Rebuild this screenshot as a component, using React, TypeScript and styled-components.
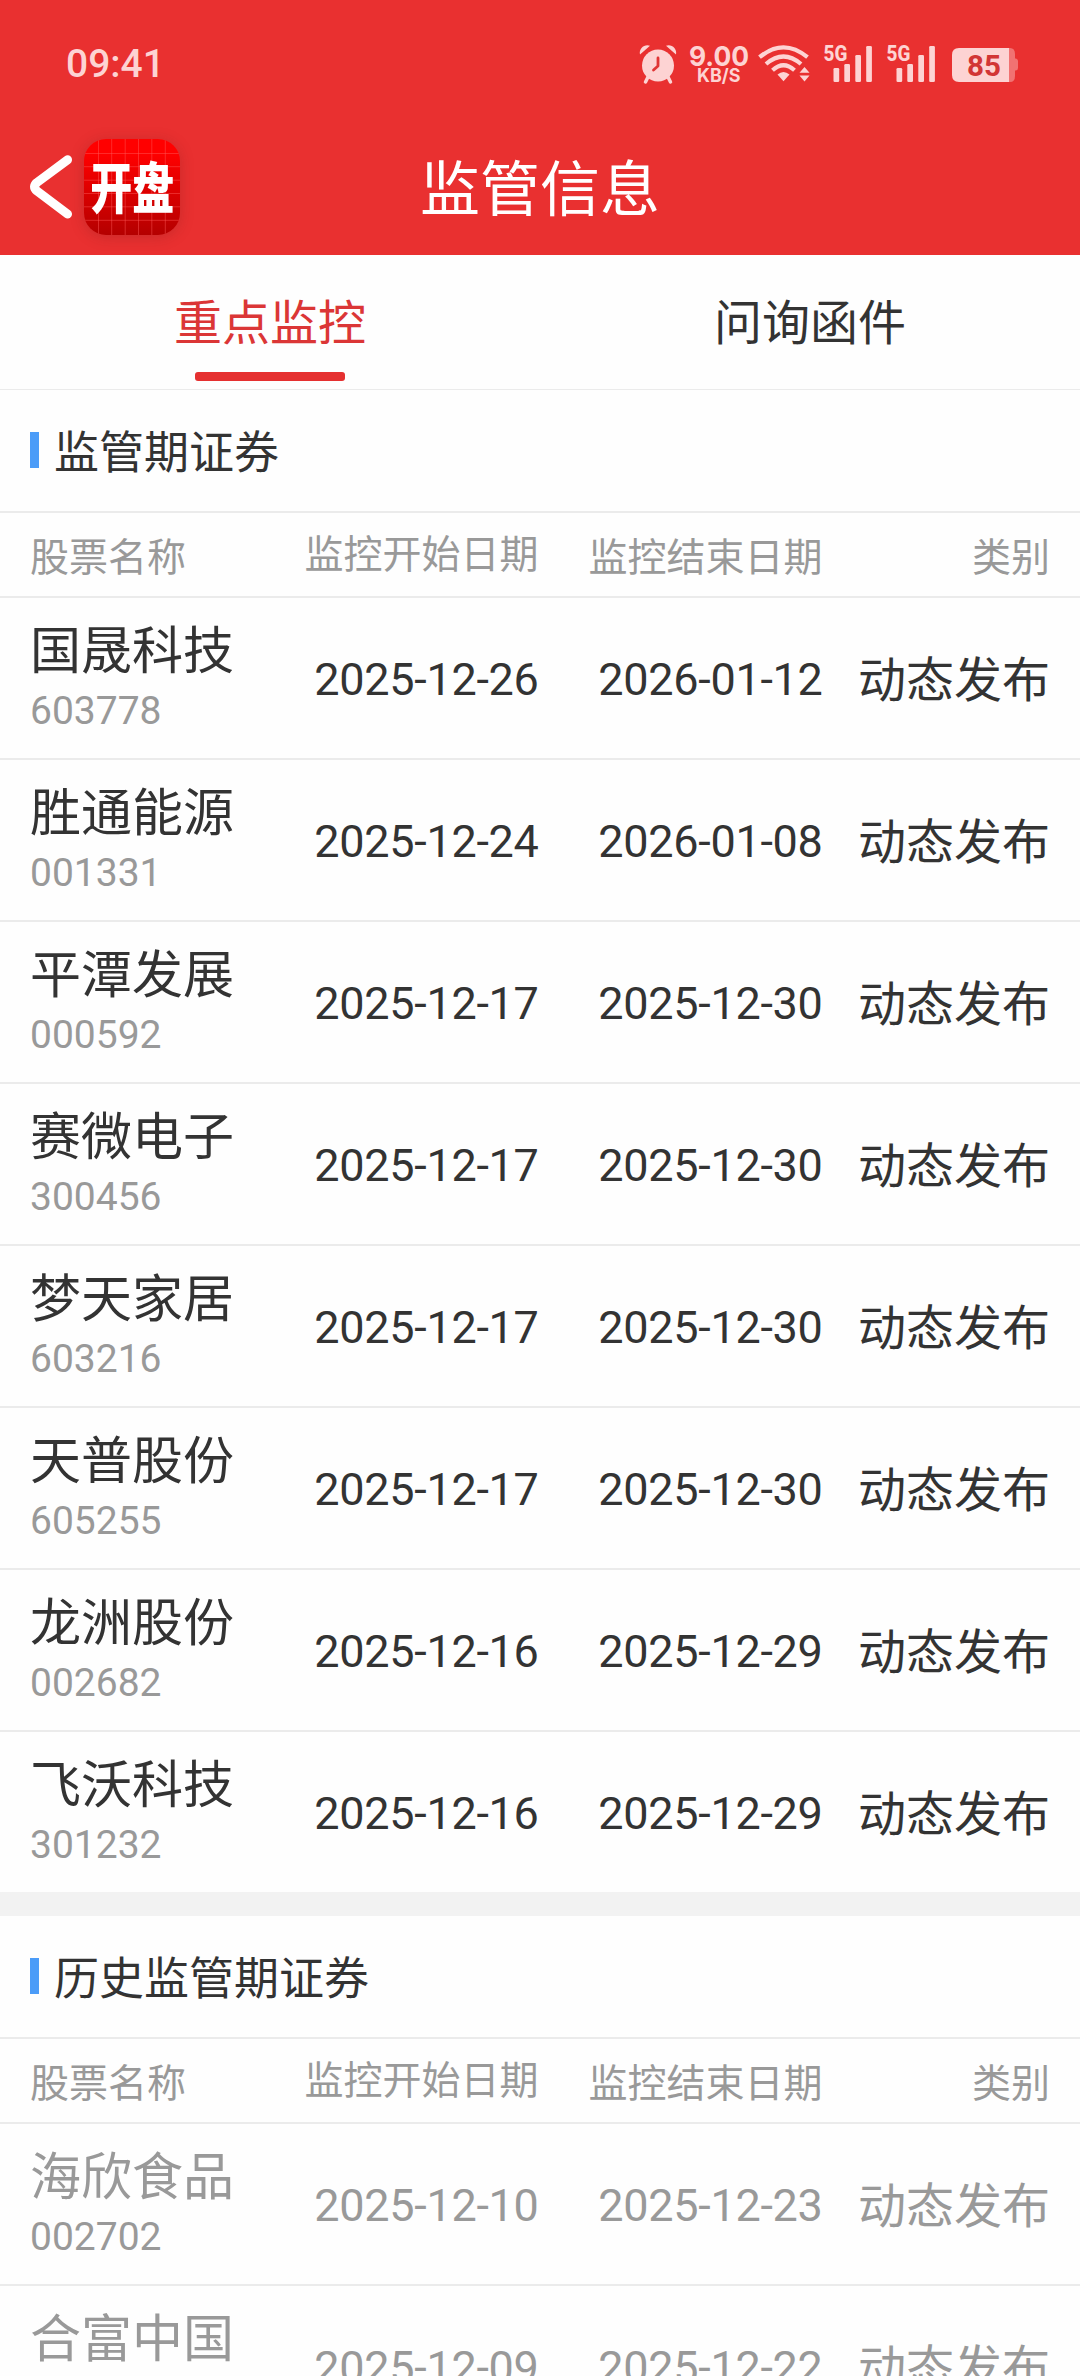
import React from "react";
import styled, { createGlobalStyle } from "styled-components";

const Global = createGlobalStyle`
  * { box-sizing: border-box; }
  body { margin: 0; background: #fff; }
`;

const Page = styled.div`
  width: 1080px;
  height: 2376px;
  overflow: hidden;
  background: #fefefe;
  color: #333;
  font-family: Roboto, "Noto Sans CJK SC", sans-serif;
`;

const TopArea = styled.header`
  height: 255px;
  background: #e93030;
`;

const StatusBar = styled.div`
  display: flex;
  align-items: flex-start;
  justify-content: space-between;
  height: 120px;
  padding: 40px 62px 0 66px;
  color: #fdd3d3;
`;

const Clock = styled.span`
  padding-top: 1px;
  font-size: 39px;
  font-weight: 500;
  line-height: 46px;
`;

const StatusIcons = styled.div`
  display: flex;
  align-items: flex-start;
`;

const StatusIcon = styled.svg<{ $gap?: number }>`
  display: block;
  overflow: visible;
  margin-left: ${(p) => p.$gap ?? 0}px;
`;

const NavBar = styled.div`
  display: grid;
  grid-template-columns: 300px 1fr 300px;
  align-items: center;
  height: 135px;
`;

const NavLeft = styled.div`
  display: flex;
  align-items: center;
  gap: 8px;
  padding: 0 0 1px 26px;
`;

const Title = styled.h1`
  margin: 0;
  padding-top: 7px;
  font-size: 60px;
  font-weight: 400;
  line-height: 80px;
  text-align: center;
  color: #fff;
`;

const LogoBox = styled.div`
  width: 96px;
  height: 96px;
  border-radius: 22px;
  overflow: hidden;
  background: linear-gradient(#ff0000 15%, #b40000);
  box-shadow: 0 2px 14px rgba(130, 30, 30, 0.32);
`;

const Tabs = styled.nav`
  display: grid;
  grid-template-columns: 1fr 1fr;
  height: 135px;
  border-bottom: 1px solid #ebebeb;
`;

const Tab = styled.div<{ $active?: boolean }>`
  display: flex;
  flex-direction: column;
  align-items: center;
  justify-content: space-between;
  padding: 34px 0 8px;
  font-size: 48px;
  line-height: 70px;
  color: ${(p) => (p.$active ? "#db3636" : "#333")};
`;

const Indicator = styled.div`
  width: 150px;
  height: 9px;
  border-radius: 3px;
  background: #e53030;
`;

const Section = styled.section`
  & + & {
    border-top: 24px solid #f2f2f2;
  }
`;

const SectionTitle = styled.h2`
  display: flex;
  align-items: center;
  gap: 15px;
  height: 123px;
  margin: 0;
  padding: 0 30px 1px;
  border-bottom: 2px solid #ebebeb;
  font-size: 45px;
  font-weight: 400;
  line-height: 60px;
`;

const Marker = styled.span`
  width: 9px;
  height: 36px;
  background: #4b9cf8;
`;

const SectionText = styled.span`
  padding-top: 8px;
`;

const Grid = styled.div`
  display: grid;
  grid-template-columns: 230px 278.5px 284px 1fr;
  align-items: center;
  padding: 0 30px;
  text-align: right;
`;

const HeadRow = styled(Grid)`
  height: 85px;
  border-bottom: 2px solid #ebebeb;
  font-size: 39px;
  line-height: 52px;
  color: #999;
`;

const HeadCell = styled.span<{ $left?: boolean; $raised?: boolean }>`
  text-align: ${(p) => (p.$left ? "left" : "right")};
  padding-top: ${(p) => (p.$raised ? 0 : 6)}px;
`;

const StockRow = styled(Grid)<{ $past?: boolean }>`
  height: 162px;
  border-bottom: 2px solid #ebebeb;
  color: ${(p) => (p.$past ? "#999" : "#333")};

  &:last-child {
    height: 160px;
    border-bottom: 0;
  }
`;

const Stock = styled.div`
  padding-top: 3px;
  text-align: left;
`;

const StockName = styled.div`
  font-size: 51px;
  line-height: 62px;
`;

const StockCode = styled.div`
  font-size: 39px;
  line-height: 56px;
  color: #999;
`;

const DateCell = styled.span`
  font-size: 45px;
  line-height: 60px;
  letter-spacing: -0.3px;
  padding-top: 3px;
`;

const Category = styled.span`
  font-size: 48px;
  line-height: 60px;
  padding-top: 5px;
`;

function AlarmIcon() {
  return (
    <StatusIcon width="38" height="46" viewBox="0 0 38 46" fill="none">
      <circle cx="19" cy="25.5" r="16" fill="currentColor" />
      <path d="M1 14.500C-.5 8.500 6 3.500 11 5.800ZM37 14.500C38.500 8.500 32 3.500 27 5.800Z" fill="currentColor" />
      <path d="M9 37 6.500 42M29 37 31.500 42" stroke="currentColor" strokeWidth="3.500" strokeLinecap="round" />
      <path d="M19 18V26L14.500 30" stroke="#e03535" strokeWidth="2.800" strokeLinecap="round" strokeLinejoin="round" />
    </StatusIcon>
  );
}

function NetSpeed() {
  return (
    <StatusIcon $gap={12} width="60" height="46" viewBox="0 0 60 46" fill="currentColor" fontFamily="Inter, sans-serif">
      <text x="0" y="25.500" fontSize="27.500" fontWeight="700" textLength="60" lengthAdjust="spacingAndGlyphs">9.00</text>
      <text x="8" y="41.600" fontSize="18.500" fontWeight="700" textLength="43.500" lengthAdjust="spacingAndGlyphs">KB/S</text>
    </StatusIcon>
  );
}

function WifiIcon() {
  return (
    <StatusIcon $gap={9} width="52" height="46" viewBox="0 0 52 46" fill="none">
      <g stroke="currentColor" strokeWidth="4.200">
        <path d="M1.500 17.200Q25.500-2.500 49.500 17.200" />
        <path d="M8 24Q25.500 9 43 24" />
        <path d="M14.500 30.300Q25.500 20.300 36.500 30.300" />
      </g>
      <path d="M19.500 34.500Q25.500 29.300 31.500 34.500L25.500 41.300Z" fill="currentColor" />
      <path d="M41.500 32.800 46.500 27 51.500 32.800ZM41.500 35.500H51.500L46.500 41.500Z" fill="currentColor" />
    </StatusIcon>
  );
}

function SignalIcon({ gap }: { gap: number }) {
  const bars = [
    [9.5, 28],
    [20.3, 24],
    [31.3, 15],
    [42.2, 6],
  ];
  return (
    <StatusIcon $gap={gap} width="48" height="46" viewBox="0 0 48 46" fill="currentColor">
      <text x="-0.500" y="20.800" fontSize="21.500" fontWeight="800" textLength="23.800" lengthAdjust="spacingAndGlyphs">5G</text>
      {bars.map(([x, y]) => (
        <rect key={x} x={x} y={y} width="5.700" height={42 - y} rx="1.300" />
      ))}
    </StatusIcon>
  );
}

function BatteryIcon() {
  return (
    <StatusIcon $gap={17} width="66" height="46" viewBox="0 0 66 46">
      <path d="M57 8H58Q63 8 63 14V18.500H64Q66 19 66 21V28Q66 30 64 30.500H63V36Q63 42 58 42H57Z" fill="#f17272" />
      <path d="M57 8H7Q0 8 0 15V35Q0 42 7 42H57Z" fill="currentColor" />
      <text x="15" y="36" fontSize="29.500" fontWeight="700" fill="#d23535">85</text>
    </StatusIcon>
  );
}

function BackIcon() {
  return (
    <svg width="50" height="66" viewBox="0 0 50 66" fill="none">
      <path d="M41.500 5.800 11 28.500Q6 32.800 11 37L41.500 60" stroke="#fff" strokeWidth="9" strokeLinecap="round" strokeLinejoin="round" />
    </svg>
  );
}

function Logo() {
  const lines = [14.5, 27.7, 41.2, 54.5, 67.8, 81.3];
  return (
    <LogoBox>
      <svg width="96" height="96" viewBox="0 0 96 96">
        {lines.map((p) => (
          <path key={p} d={`M${p} 0V96M0 ${p}H96`} stroke="#ff5a5a" strokeOpacity="0.450" strokeWidth="1" />
        ))}
        <text
          transform="translate(6.300 69) scale(1 1.310)"
          fontSize="42"
          fontWeight="900"
          fill="#fff"
          fontFamily="'Noto Sans CJK SC', sans-serif"
        >
          开盘
        </text>
      </svg>
    </LogoBox>
  );
}

type StockItem = [name: string, code: string, start: string, end: string];

const current: StockItem[] = [
  ["国晟科技", "603778", "2025-12-26", "2026-01-12"],
  ["胜通能源", "001331", "2025-12-24", "2026-01-08"],
  ["平潭发展", "000592", "2025-12-17", "2025-12-30"],
  ["赛微电子", "300456", "2025-12-17", "2025-12-30"],
  ["梦天家居", "603216", "2025-12-17", "2025-12-30"],
  ["天普股份", "605255", "2025-12-17", "2025-12-30"],
  ["龙洲股份", "002682", "2025-12-16", "2025-12-29"],
  ["飞沃科技", "301232", "2025-12-16", "2025-12-29"],
];

const history: StockItem[] = [
  ["海欣食品", "002702", "2025-12-10", "2025-12-23"],
  ["合富中国", "", "2025-12-09", "2025-12-22"],
];

function StockTable({ title, items, past }: { title: string; items: StockItem[]; past?: boolean }) {
  return (
    <Section>
      <SectionTitle>
        <Marker />
        <SectionText>{title}</SectionText>
      </SectionTitle>
      <HeadRow>
        <HeadCell $left>股票名称</HeadCell>
        <HeadCell $raised>监控开始日期</HeadCell>
        <HeadCell>监控结束日期</HeadCell>
        <HeadCell>类别</HeadCell>
      </HeadRow>
      <div>
        {items.map(([name, code, start, end]) => (
          <StockRow key={name} $past={past}>
            <Stock>
              <StockName>{name}</StockName>
              <StockCode>{code || "\u00a0"}</StockCode>
            </Stock>
            <DateCell>{start}</DateCell>
            <DateCell>{end}</DateCell>
            <Category>动态发布</Category>
          </StockRow>
        ))}
      </div>
    </Section>
  );
}

export default function App() {
  return (
    <Page>
      <Global />
      <TopArea>
        <StatusBar>
          <Clock>09:41</Clock>
          <StatusIcons>
            <AlarmIcon />
            <NetSpeed />
            <WifiIcon />
            <SignalIcon gap={14} />
            <SignalIcon gap={15} />
            <BatteryIcon />
          </StatusIcons>
        </StatusBar>
        <NavBar>
          <NavLeft>
            <BackIcon />
            <Logo />
          </NavLeft>
          <Title>监管信息</Title>
        </NavBar>
      </TopArea>
      <Tabs>
        <Tab $active>
          重点监控
          <Indicator />
        </Tab>
        <Tab>问询函件</Tab>
      </Tabs>
      <StockTable title="监管期证券" items={current} />
      <StockTable title="历史监管期证券" items={history} past />
    </Page>
  );
}
